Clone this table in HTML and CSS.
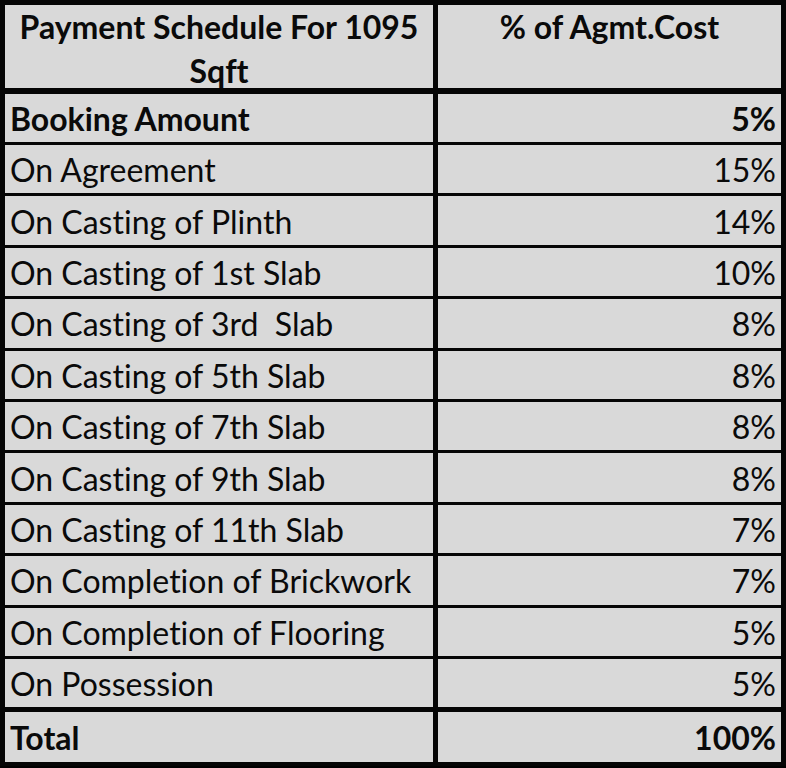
FILE: index.html
```html
<!DOCTYPE html>
<html>
<head>
<meta charset="utf-8">
<link rel="stylesheet" href="styles.css">
</head>
<body>
<table class="schedule">
  <tr class="head">
    <th class="label"><div class="head-text">Payment Schedule For 1095 Sqft</div></th>
    <th class="value"><div class="head-text">% of Agmt.Cost</div></th>
  </tr>
  <tr class="strong first">
    <td class="label">Booking Amount</td>
    <td class="value">5%</td>
  </tr>
  <tr><td class="label">On Agreement</td><td class="value">15%</td></tr>
  <tr><td class="label">On Casting of Plinth</td><td class="value">14%</td></tr>
  <tr><td class="label">On Casting of 1st Slab</td><td class="value">10%</td></tr>
  <tr><td class="label">On Casting of 3rd&nbsp; Slab</td><td class="value">8%</td></tr>
  <tr><td class="label">On Casting of 5th Slab</td><td class="value">8%</td></tr>
  <tr><td class="label">On Casting of 7th Slab</td><td class="value">8%</td></tr>
  <tr><td class="label">On Casting of 9th Slab</td><td class="value">8%</td></tr>
  <tr><td class="label">On Casting of 11th Slab</td><td class="value">7%</td></tr>
  <tr><td class="label">On Completion of Brickwork</td><td class="value">7%</td></tr>
  <tr><td class="label">On Completion of Flooring</td><td class="value">5%</td></tr>
  <tr class="last"><td class="label">On Possession</td><td class="value">5%</td></tr>
  <tr class="strong total">
    <td class="label">Total</td>
    <td class="value">100%</td>
  </tr>
</table>
</body>
</html>
```

FILE: styles.css
```css
html, body {
  margin: 0;
  padding: 0;
  background: #000;
}

.schedule {
  width: 786px;
  border-collapse: separate;
  border-spacing: 0;
  border-style: solid;
  border-color: #050505;
  border-width: 5px 5px 4px 5px;
  background: #d9d9d9;
  font-family: Lato, "Open Sans", sans-serif;
  font-size: 32px;
  font-variant-ligatures: none;
  color: #0a0a0a;
  table-layout: fixed;
}

.schedule th,
.schedule td {
  box-sizing: border-box;
  padding: 2px 5px 0 5px;
  border-bottom: 3px solid #050505;
  height: 51.4px;
  line-height: 36px;
  white-space: nowrap;
  vertical-align: middle;
}

.schedule .label {
  width: 433px;
  text-align: left;
  border-right: 5px solid #050505;
}

.schedule .value {
  text-align: right;
}

.schedule .head th {
  height: 89px;
  border-bottom-width: 6px;
  vertical-align: top;
  text-align: center;
  font-weight: 700;
  white-space: normal;
  padding: 0 4px;
}

.head-text {
  height: 83px;
  line-height: 44px;
  overflow: visible;
}

.schedule .first td {
  height: 51px;
}

.schedule .strong td {
  font-weight: 700;
}

.schedule .last td {
  height: 53.5px;
  border-bottom-width: 5px;
}

.schedule .total td {
  height: 50px;
  border-bottom: none;
}
```
